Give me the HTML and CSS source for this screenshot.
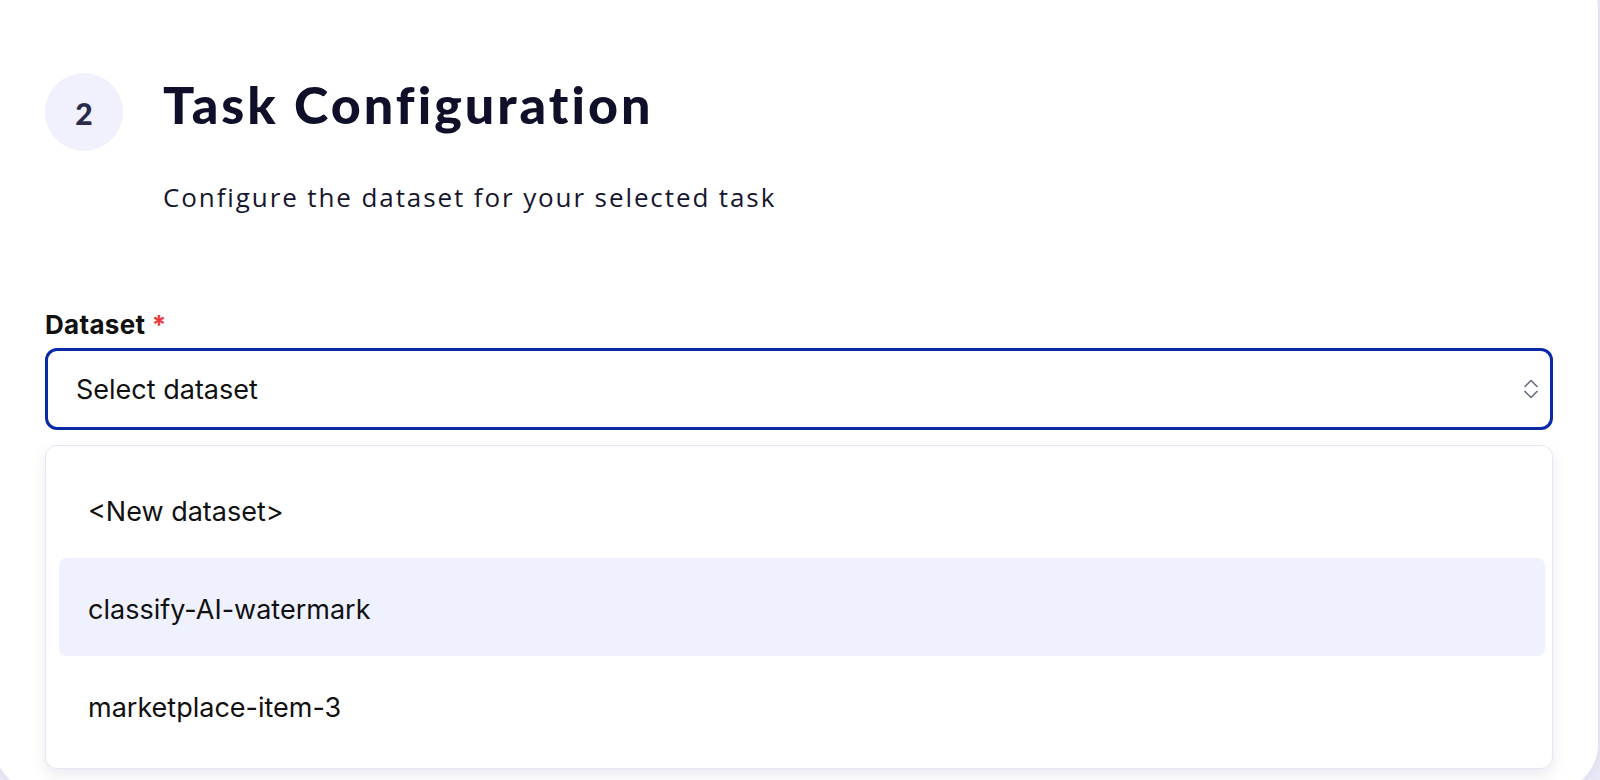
FILE: index.html
```html
<!DOCTYPE html>
<html lang="en">
<head>
<meta charset="utf-8">
<title>Task Configuration</title>
<link rel="stylesheet" href="styles.css">
</head>
<body>
<div class="card">
  <header class="step-header">
    <div class="step-num">2</div>
    <h1 class="step-title">Task Configuration</h1>
    <p class="step-sub">Configure the dataset for your selected task</p>
  </header>

  <div class="field">
    <label class="field-label">Dataset <span class="req">*</span></label>
    <div class="select">
      <span class="select-text">Select dataset</span>
      <svg class="select-icon" width="16" height="24" viewBox="0 0 16 24" fill="none" stroke="#6b7280" stroke-width="1.7" stroke-linecap="round" stroke-linejoin="round">
        <path d="M2 9.5 L8 3.5 L14 9.5"/>
        <path d="M2 14.5 L8 20.5 L14 14.5"/>
      </svg>
    </div>
    <ul class="menu">
      <li class="menu-item">&lt;New dataset&gt;</li>
      <li class="menu-item active">classify-AI-watermark</li>
      <li class="menu-item">marketplace-item-3</li>
    </ul>
  </div>
</div>
</body>
</html>
```

FILE: styles.css
```css
* { box-sizing: border-box; }
html, body { margin: 0; padding: 0; }
body {
  background: #e9e9f6;
  width: 1600px;
  height: 780px;
  overflow: hidden;
  font-family: "Inter", "Liberation Sans", sans-serif;
  color: #111;
}
.card {
  margin: -40px 0 0 -6px;
  width: 1604px;
  height: 832px;
  background: #fff;
  border-radius: 48px;
  box-shadow: 0 0 18px rgba(120, 120, 170, 0.12);
  padding: 113px 45px 0 51px;
}
.step-header {
  display: grid;
  grid-template-columns: 78px 1fr;
  column-gap: 40px;
  align-items: center;
}
.step-num {
  width: 78px;
  height: 78px;
  border-radius: 50%;
  background: #f0f1fd;
  color: #2a2a4c;
  font-family: "Lato", sans-serif;
  font-weight: 900;
  font-size: 30px;
  padding-top: 2px;
  display: flex;
  align-items: center;
  justify-content: center;
}
.step-title {
  margin: -16px 0 0;
  font-family: "Lato", sans-serif;
  font-weight: 900;
  font-size: 52px;
  color: #0f0f2a;
  letter-spacing: 3px;
}
.step-sub {
  grid-column: 2;
  margin: 28px 0 0;
  font-family: "Open Sans", sans-serif;
  font-size: 26px;
  color: #16162e;
  letter-spacing: 1.9px;
}
.field { margin-top: 94px; }
.field-label {
  display: block;
  font-size: 26px;
  font-weight: 700;
  letter-spacing: 0.3px;
  color: #111;
  margin-bottom: 8px;
}
.req { color: #ef3a3a; }
.select {
  height: 82px;
  border: 3px solid #0a2aa6;
  border-radius: 12px;
  display: flex;
  align-items: center;
  justify-content: space-between;
  padding: 0 11px 0 28px;
}
.select-text { font-size: 27px; color: #111; }
.menu {
  list-style: none;
  margin: 15px 0 0;
  padding: 14px 7px 14px 13px;
  border: 1px solid #e6e7f4;
  border-radius: 12px;
  box-shadow: 0 6px 14px rgba(80, 80, 130, 0.12);
  background: #fff;
}
.menu-item {
  height: 98px;
  display: flex;
  align-items: center;
  padding: 5px 0 0 29px;
  font-size: 27px;
  color: #111;
  border-radius: 8px;
}
.menu-item.active { background: #eff1fe; }
```
